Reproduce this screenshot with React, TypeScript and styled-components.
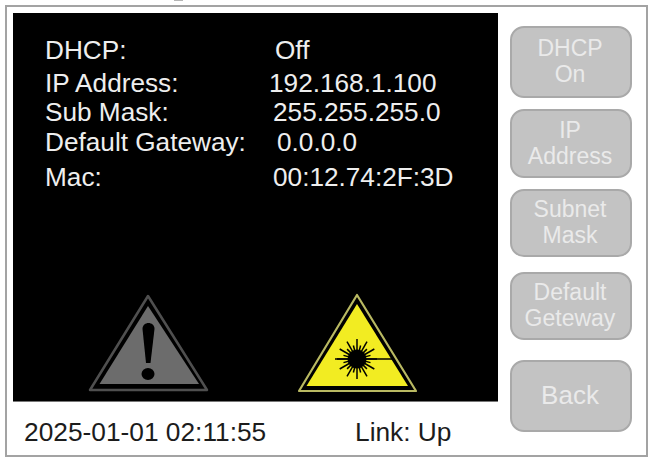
import React from "react";
import styled, { createGlobalStyle } from "styled-components";

const Global = createGlobalStyle`
  html, body { margin: 0; padding: 0; background: #fff; }
  body { font-family: "Liberation Sans", Arial, sans-serif; }
`;

const Page = styled.div`
  position: relative;
  width: 660px;
  height: 463px;
  padding: 5px 0 0 5px;
  box-sizing: border-box;
  overflow: hidden;
  background: #fff;
`;

const ClippedMark = styled.span`
  position: absolute;
  left: 174px;
  top: 0;
  width: 9px;
  height: 1px;
  background: #b5b5b5;
`;

const Frame = styled.div`
  width: 643px;
  height: 452px;
  box-sizing: border-box;
  border: 2px solid #a3a3a3;
  padding: 6px 0 0 6px;
  display: flex;
  align-items: flex-start;
`;

const LeftColumn = styled.div`
  width: 485px;
  display: flex;
  flex-direction: column;
`;

const Screen = styled.div`
  height: 389px;
  box-sizing: border-box;
  background: #000;
  padding: 22px 0 0 32px;
  display: flex;
  flex-direction: column;
  border-bottom: 1px solid #777;
`;

const InfoRow = styled.div<{ $top: number }>`
  display: flex;
  height: 30px;
  line-height: 30px;
  margin-top: ${(p) => p.$top}px;
  font-size: 26.2px;
  color: #eeeeee;
  white-space: nowrap;
`;

const Label = styled.span<{ $width: number }>`
  width: ${(p) => p.$width}px;
`;

const Value = styled.span``;

const Icons = styled.div`
  margin-top: auto;
  margin-left: 41px;
  margin-bottom: 6px;
  display: flex;
  gap: 85px;
`;

const Footer = styled.div`
  display: flex;
  padding: 15px 0 0 11px;
  font-size: 26.3px;
  line-height: 30px;
  color: #1c1c1c;
  white-space: nowrap;
`;

const DateTime = styled.span`
  width: 331px;
`;

const Link = styled.span``;

const Buttons = styled.div`
  margin-left: 12px;
  padding-top: 13px;
  display: flex;
  flex-direction: column;
`;

const Button = styled.button<{ $height: number; $top: number; $size: number }>`
  width: 122px;
  height: ${(p) => p.$height}px;
  margin-top: ${(p) => p.$top}px;
  padding: 0 2px 2px 0;
  box-sizing: border-box;
  border: 2px solid #a9a9a9;
  border-radius: 14px;
  background: #c3c3c3;
  color: #eaeaea;
  font-family: "Liberation Sans", Arial, sans-serif;
  font-size: ${(p) => p.$size}px;
  line-height: 26px;
  text-align: center;
`;

const WarningIcon = () => (
  <svg width="124" height="104" viewBox="0 0 124 104">
    <path d="M62 5 L121 99 H4 Z" fill="#000" stroke="#4f4f4f" strokeWidth="2.5" strokeLinejoin="round" />
    <path d="M62 15 L113 93 H13.5 Z" fill="#6c6c6c" />
    <path d="M56.5 38 C56.5 30 68.5 30 68.5 38 L64.5 72 H60 Z" fill="#000" />
    <ellipse cx="62" cy="83" rx="6.5" ry="6" fill="#000" />
  </svg>
);

const rays = Array.from({ length: 24 }, (_, i) => (i * 360) / 24);

const LaserIcon = () => (
  <svg width="124" height="104" viewBox="0 0 124 104">
    <path d="M62 4 L121 100 H4 Z" fill="#000" stroke="#b9b962" strokeWidth="2.2" strokeLinejoin="round" />
    <path d="M62 13 L113 95 H11.5 Z" fill="#f2ec22" />
    <g stroke="#000" strokeWidth="1.5" transform="translate(62 68)">
      {rays.map((a, i) => (
        <line key={a} x1="0" y1="0" x2={0} y2={i % 2 ? -14 : -20} transform={`rotate(${a})`} />
      ))}
    </g>
    <circle cx="62" cy="68" r="9.5" fill="#000" />
    <path d="M40 68 H97" stroke="#000" strokeWidth="1.7" />
  </svg>
);

export default function App() {
  return (
    <>
      <Global />
      <Page>
        <ClippedMark />
        <Frame>
          <LeftColumn>
            <Screen>
              <InfoRow $top={0}>
                <Label $width={230}>DHCP:</Label>
                <Value>Off</Value>
              </InfoRow>
              <InfoRow $top={3}>
                <Label $width={224}>IP Address:</Label>
                <Value>192.168.1.100</Value>
              </InfoRow>
              <InfoRow $top={-1}>
                <Label $width={228}>Sub Mask:</Label>
                <Value>255.255.255.0</Value>
              </InfoRow>
              <InfoRow $top={0}>
                <Label $width={232}>Default Gateway:</Label>
                <Value>0.0.0.0</Value>
              </InfoRow>
              <InfoRow $top={5}>
                <Label $width={228}>Mac:</Label>
                <Value>00:12.74:2F:3D</Value>
              </InfoRow>
              <Icons>
                <WarningIcon />
                <LaserIcon />
              </Icons>
            </Screen>
            <Footer>
              <DateTime>2025-01-01 02:11:55</DateTime>
              <Link>Link: Up</Link>
            </Footer>
          </LeftColumn>
          <Buttons>
            <Button $height={72} $top={0} $size={23}>DHCP<br />On</Button>
            <Button $height={69} $top={11} $size={23}>IP<br />Address</Button>
            <Button $height={68} $top={11} $size={23}>Subnet<br />Mask</Button>
            <Button $height={68} $top={15} $size={23}>Default<br />Geteway</Button>
            <Button $height={72} $top={20} $size={26}>Back</Button>
          </Buttons>
        </Frame>
      </Page>
    </>
  );
}
